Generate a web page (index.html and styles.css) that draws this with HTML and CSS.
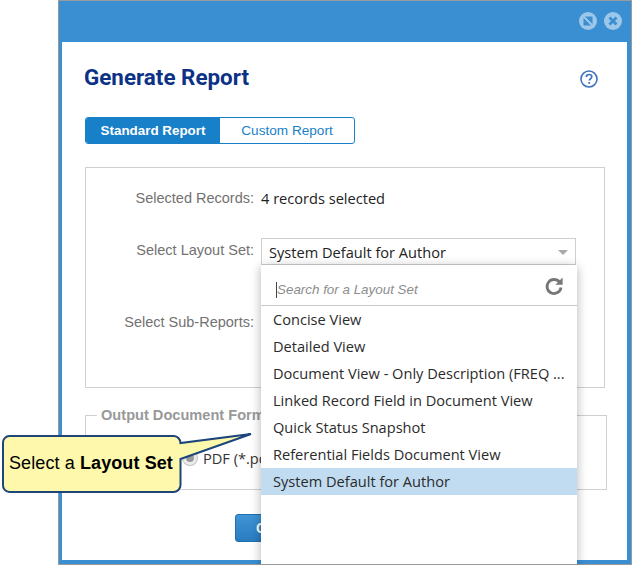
FILE: index.html
```html
<!DOCTYPE html>
<html lang="en">
<head>
<meta charset="utf-8">
<title>Generate Report</title>
<link rel="stylesheet" href="styles.css">
</head>
<body>
<div class="dialog">
  <header class="titlebar">
    <svg class="winicon" viewBox="0 0 18 18" aria-hidden="true"><circle cx="9" cy="9" r="9" fill="#9cc7e9"/><path d="M5 4.500h8.500v9h-9v-8.500z" fill="#3a8fd3"/><path d="M3.500 3.500l11 11" stroke="#9cc7e9" stroke-width="2"/></svg>
    <svg class="winicon" viewBox="0 0 18 18" aria-hidden="true"><circle cx="9" cy="9" r="9" fill="#9cc7e9"/><path d="M5.500 5.500l7 7M12.500 5.500l-7 7" stroke="#3a8fd3" stroke-width="2.800"/></svg>
  </header>
  <main class="content">
    <div class="heading">
      <h1>Generate Report</h1>
      <svg class="help" viewBox="0 0 18 18" aria-hidden="true"><circle cx="9" cy="9" r="8" fill="none" stroke="#3f74bd" stroke-width="1.600"/><path d="M6.300 7.100c0-1.700 1.200-2.600 2.800-2.600s2.700.9 2.700 2.300c0 1.900-2.500 1.900-2.500 3.800" fill="none" stroke="#3f74bd" stroke-width="1.700"/><rect x="8.300" y="12" width="1.800" height="1.800" fill="#3f74bd"/></svg>
    </div>
    <div class="tabs">
      <div class="tab active">Standard Report</div>
      <div class="tab">Custom Report</div>
    </div>
    <section class="panel">
      <div class="row records">
        <span class="label">Selected Records:</span>
        <span class="value">4 records selected</span>
      </div>
      <div class="row layoutset">
        <span class="label">Select Layout Set:</span>
        <div class="select">
          <span>System Default for Author</span>
          <i class="caret"></i>
        </div>
      </div>
      <div class="row subreports">
        <span class="label">Select Sub-Reports:</span>
      </div>
    </section>
    <fieldset class="output">
      <legend>Output Document Format</legend>
      <div class="radio-row"><i class="radio"></i><span>PDF (*.pdf)</span></div>
    </fieldset>
    <div class="actions"><button class="primary">Generate</button></div>
  </main>
</div>

<div class="dropdown">
  <div class="search">
    <span class="caret-line"></span>
    <span class="placeholder">Search for a Layout Set</span>
    <svg class="refresh" viewBox="0 0 20 20" aria-hidden="true"><path d="M15.600 6.200A7 7 0 1 0 17 11.500" fill="none" stroke="#777" stroke-width="2.800"/><path d="M18.600 1.500v7.200h-7.200z" fill="#777"/></svg>
  </div>
  <ul class="options">
    <li>Concise View</li>
    <li>Detailed View</li>
    <li>Document View - Only Description (FREQ ...</li>
    <li>Linked Record Field in Document View</li>
    <li>Quick Status Snapshot</li>
    <li>Referential Fields Document View</li>
    <li class="selected">System Default for Author</li>
  </ul>
</div>

<div class="callout">
  <svg class="callout-shape" viewBox="0 0 256 62" aria-hidden="true"><path d="M9.500 4H174a7 7 0 0 1 6.500 7L251 2 180.500 27V53a7 7 0 0 1-7 7H9.500a6.500 6.500 0 0 1-6.500-7V11a6.500 6.500 0 0 1 6.500-7z" fill="#fdf8ac" stroke="#1c4579" stroke-width="2"/></svg>
  <p>Select a <b>Layout Set</b></p>
</div>
</body>
</html>
```
FILE: styles.css
```css
* { box-sizing: border-box; }
html, body { margin: 0; padding: 0; }
body {
  width: 632px;
  height: 565px;
  overflow: hidden;
  background: #fff;
  padding-left: 58px;
  font-family: "Liberation Sans", Arial, sans-serif;
  position: relative;
}
.dialog {
  width: 574px;
  height: 565px;
  border: 1px solid #9a9a9a;
  background: #3a8fd3;
  padding: 0 4px 4px 3px;
  display: flex;
  flex-direction: column;
}
.titlebar {
  height: 40px;
  flex: none;
  display: flex;
  justify-content: flex-end;
  align-items: center;
  gap: 7px;
  padding: 0 5px 2px 0;
  margin-top: 1px;
}
.winicon { width: 18px; height: 18px; display: block; }
.content {
  flex: 1;
  background: #fff;
  padding: 0 0 0 22px;
  display: flex;
  flex-direction: column;
}
.heading {
  display: flex;
  justify-content: space-between;
  align-items: flex-start;
  height: 75px;
  padding-right: 29px;
}
h1 {
  margin: 22px 0 0;
  font: 700 22.4px/26px Roboto, sans-serif;
  color: #0b3285;
}
.help { width: 18px; height: 18px; margin-top: 28px; }
.tabs {
  display: flex;
  width: 270px;
  height: 27px;
  border: 1px solid #187fc9;
  border-radius: 3px;
  overflow: hidden;
  margin-left: 1px;
  flex: none;
}
.tab {
  flex: 1;
  font: 400 13.6px/25px "Liberation Sans", sans-serif;
  color: #187fc9;
  text-align: center;
}
.tab.active {
  flex: none;
  width: 134px;
  background: #187fc9;
  color: #fff;
  font-weight: 700;
  font-size: 13.4px;
}
.panel {
  width: 520px;
  height: 221px;
  margin: 23px 0 0 1px;
  border: 1px solid #d0d0d0;
  flex: none;
}
.row {
  display: flex;
  align-items: flex-start;
  gap: 7px;
}
.label {
  width: 168px;
  text-align: right;
  font-size: 14.5px;
  line-height: 18px;
  color: #727272;
  flex: none;
}
.records { margin-top: 21px; height: 20px; }
.value {
  font: 400 14.6px/18px "Open Sans", sans-serif;
  color: #222;
}
.layoutset { margin-top: 29px; }
.layoutset .label { margin-top: 3px; }
.select {
  width: 315px;
  height: 27px;
  border: 1px solid #cfcfcf;
  padding: 1px 7px 0;
  display: flex;
  align-items: center;
  justify-content: space-between;
  font: 400 14.6px/25px "Open Sans", sans-serif;
  color: #222;
}
.caret {
  border: 5px solid transparent;
  border-top: 5px solid #a8a8a8;
  border-bottom: 0;
}
.subreports { margin-top: 48px; }
.output {
  width: 522px;
  height: 83px;
  margin: 19px 0 0 1px;
  padding: 0;
  border: 1px solid #d0d0d0;
  flex: none;
}
.output legend {
  margin-left: 11px;
  padding: 0 4px;
  font-size: 14.6px;
  line-height: 16px;
  font-weight: 700;
  color: #999;
  white-space: nowrap;
}
.radio-row {
  display: flex;
  align-items: center;
  gap: 6px;
  margin: 25px 0 0 97px;
  font: 400 14.6px/20px "Open Sans", sans-serif;
  color: #333;
}
.radio {
  width: 14px;
  height: 14px;
  border-radius: 50%;
  border: 3px solid #ececec;
  background: #9a9a9a;
  box-shadow: 0 0 0 1px #c4c4c4;
}
.actions { margin: 24px 0 0 151px; }
.primary {
  width: 90px;
  height: 28px;
  border: 1px solid #1f6fae;
  border-radius: 3px;
  background: linear-gradient(#3f95d6, #2a7cc0);
  color: #fff;
  font: 700 14px "Liberation Sans", sans-serif;
  padding: 0 0 0 20px;
  text-align: left;
}
.dropdown {
  position: absolute;
  left: 261px;
  top: 265px;
  width: 316px;
  height: 300px;
  background: #fff;
  box-shadow: 0 2px 10px rgba(0, 0, 0, .3);
  border-bottom: 1px solid #999;
}
.search {
  height: 41px;
  border-bottom: 1px solid #c8c8c8;
  display: flex;
  align-items: center;
  justify-content: space-between;
  padding: 9px 13px 0 15px;
}
.placeholder {
  font: italic 400 13.4px/20px "Liberation Sans", sans-serif;
  color: #8c8c8c;
  flex: 1;
}
.caret-line {
  width: 1px;
  height: 16px;
  background: #444;
  flex: none;
}
.refresh { width: 20px; height: 20px; margin-top: -8px; }
.options {
  list-style: none;
  margin: 0;
  padding: 0;
}
.options li {
  height: 27px;
  padding-left: 12px;
  font: 400 14.6px/27px "Open Sans", sans-serif;
  color: #2b2b2b;
  white-space: nowrap;
}
.options li.selected { background: #c1dcf1; }
.callout {
  position: absolute;
  left: 0;
  top: 432px;
  width: 256px;
  height: 62px;
}
.callout-shape {
  display: block;
  width: 256px;
  height: 62px;
  position: absolute;
  left: 0;
  top: 0;
}
.callout p {
  position: relative;
  margin: 0;
  padding: 21px 0 0 9px;
  font-size: 18px;
  line-height: 20px;
  letter-spacing: .1px;
  color: #000;
}
```
